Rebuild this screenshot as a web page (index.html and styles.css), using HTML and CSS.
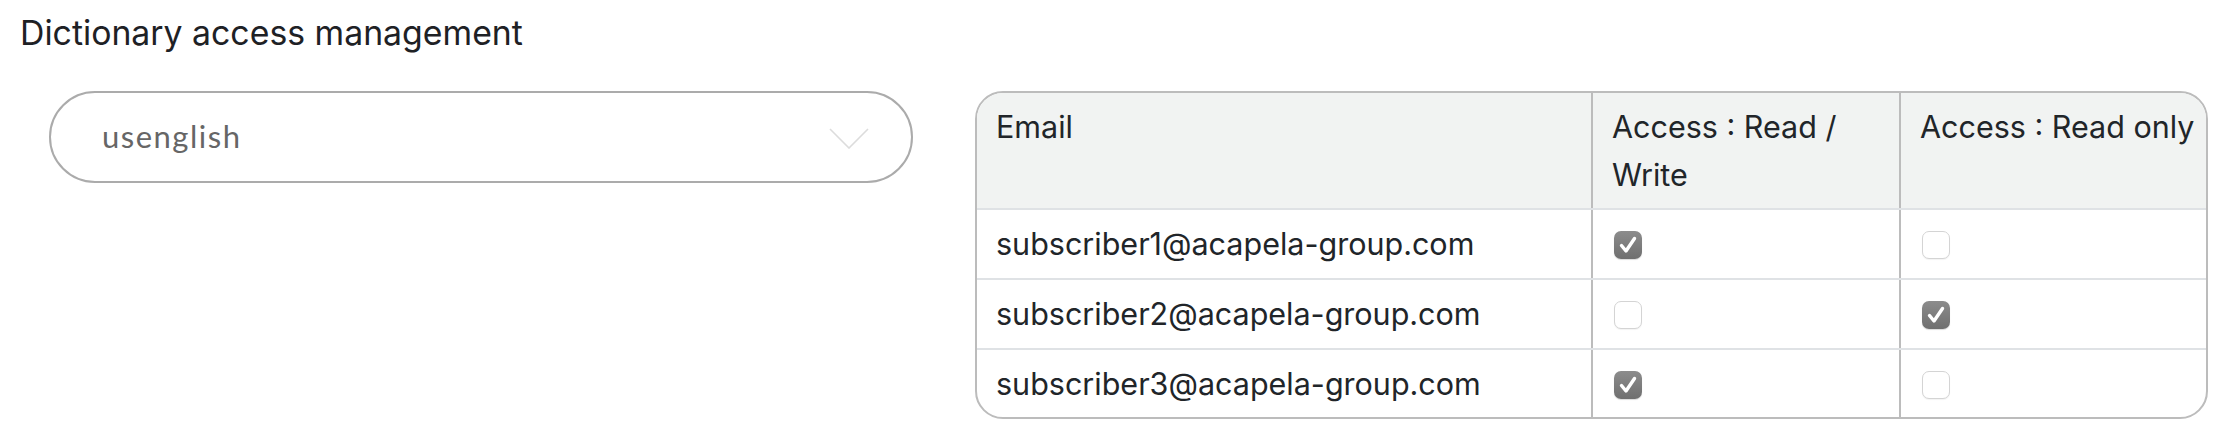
FILE: index.html
```html
<!DOCTYPE html>
<html lang="en">
<head>
<meta charset="utf-8">
<title>Dictionary access management</title>
<link rel="stylesheet" href="styles.css">
</head>
<body>
<h1 class="title">Dictionary access management</h1>
<div class="layout">
  <div class="select-col">
    <div class="select">
      <span class="select-value">usenglish</span>
      <svg class="chevron" width="40" height="21" viewBox="0 0 40 21"><polyline points="1,1 20,20 39,1" fill="none" stroke="#dcdcdc" stroke-width="1.6"/></svg>
    </div>
  </div>
  <div class="table-wrap">
    <table class="access-table">
      <colgroup>
        <col class="c-email">
        <col class="c-rw">
        <col class="c-ro">
      </colgroup>
      <thead>
        <tr>
          <th>Email</th>
          <th>Access : Read / Write</th>
          <th class="nowrap">Access : Read only</th>
        </tr>
      </thead>
      <tbody>
        <tr>
          <td>subscriber1@acapela-group.com</td>
          <td><span class="cb checked"><svg viewBox="0 0 28 28" width="28" height="28"><path d="M7.5 14.5 L12 20 L20.5 7.5" fill="none" stroke="#fff" stroke-width="3.4" stroke-linecap="round" stroke-linejoin="round"/></svg></span></td>
          <td><span class="cb"></span></td>
        </tr>
        <tr>
          <td>subscriber2@acapela-group.com</td>
          <td><span class="cb"></span></td>
          <td><span class="cb checked"><svg viewBox="0 0 28 28" width="28" height="28"><path d="M7.5 14.5 L12 20 L20.5 7.5" fill="none" stroke="#fff" stroke-width="3.4" stroke-linecap="round" stroke-linejoin="round"/></svg></span></td>
        </tr>
        <tr>
          <td>subscriber3@acapela-group.com</td>
          <td><span class="cb checked"><svg viewBox="0 0 28 28" width="28" height="28"><path d="M7.5 14.5 L12 20 L20.5 7.5" fill="none" stroke="#fff" stroke-width="3.4" stroke-linecap="round" stroke-linejoin="round"/></svg></span></td>
          <td><span class="cb"></span></td>
        </tr>
      </tbody>
    </table>
  </div>
</div>
</body>
</html>
```

FILE: styles.css
```css
html, body {
  margin: 0;
  padding: 0;
  background: #ffffff;
}

body {
  font-family: Inter, "Liberation Sans", Arial, sans-serif;
  color: #212529;
}

.title {
  margin: 0;
  padding: 11px 0 0 20px;
  font-size: 33.8px;
  font-weight: 400;
  line-height: 43px;
  color: #1e2125;
}

.layout {
  display: flex;
  align-items: flex-start;
  gap: 62px;
  padding: 37px 26px 0 49px;
}

.select-col {
  flex: 0 0 864px;
}

.select {
  box-sizing: border-box;
  height: 92px;
  border: 2px solid #ababab;
  border-radius: 46px;
  display: flex;
  align-items: center;
  justify-content: space-between;
  padding: 0 42px 0 51px;
}

.select-value {
  font-family: Lato, "Open Sans", sans-serif;
  font-size: 31px;
  letter-spacing: 1.5px;
  color: #666666;
  padding-bottom: 2px;
}

.chevron {
  display: block;
  margin-top: 2px;
}

.table-wrap {
  flex: 0 0 1233px;
  box-sizing: border-box;
  border: 2px solid #bcbcbc;
  border-radius: 28px;
  overflow: hidden;
}

.access-table {
  width: 100%;
  border-collapse: collapse;
  table-layout: fixed;
  font-size: 30.5px;
}

.c-email { width: 615px; }
.c-rw { width: 308px; }
.c-ro { width: auto; }

.access-table th,
.access-table td {
  text-align: left;
  vertical-align: top;
  padding: 10px 18px 10px 19px;
  line-height: 48px;
  border-right: 2px solid #bcbcbc;
  border-bottom: 2px solid #dfe2e5;
}

.access-table th {
  padding-bottom: 9px;
}

.access-table th:last-child,
.access-table td:last-child {
  border-right: none;
}

.access-table tbody tr:last-child td {
  border-bottom: none;
  padding-bottom: 9px;
}

.access-table th {
  font-weight: 400;
  background: #f1f3f2;
}

.nowrap {
  white-space: nowrap;
}

.cb {
  display: inline-block;
  box-sizing: border-box;
  width: 28px;
  height: 28px;
  border-radius: 7px;
  border: 1.5px solid #d4d4d4;
  background: #ffffff;
  vertical-align: middle;
  margin-top: -4px;
  margin-left: 2px;
  box-shadow: 0 1px 1px rgba(0, 0, 0, 0.05);
}

.cb svg {
  display: block;
  margin: -1.5px;
}

.cb.checked {
  border: none;
  background: linear-gradient(#8c8c8c, #6f6f6f);
  box-shadow: 0 1px 1px rgba(0, 0, 0, 0.15);
}

.cb.checked svg {
  margin: 0;
}
```
